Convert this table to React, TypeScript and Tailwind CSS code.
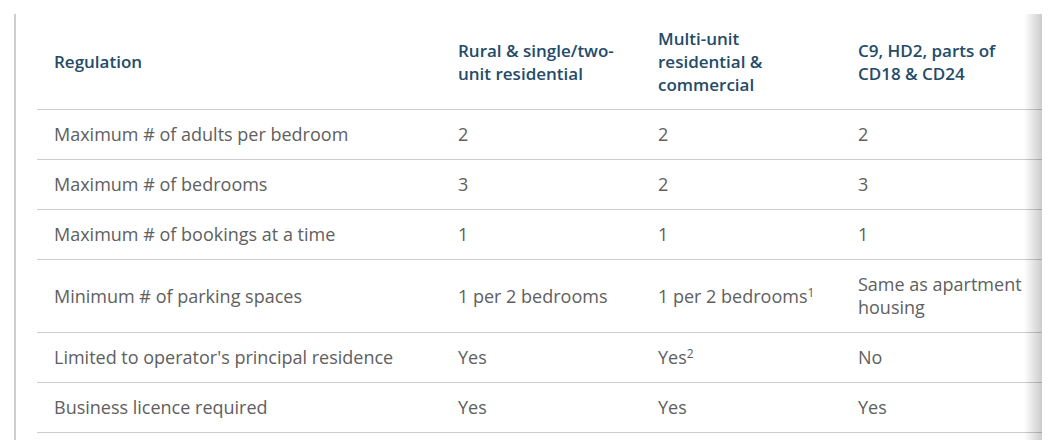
import React from "react";

const rows: { label: string; cells: React.ReactNode[] }[] = [
  { label: "Maximum # of adults per bedroom", cells: ["2", "2", "2"] },
  { label: "Maximum # of bedrooms", cells: ["3", "2", "3"] },
  { label: "Maximum # of bookings at a time", cells: ["1", "1", "1"] },
  {
    label: "Minimum # of parking spaces",
    cells: [
      "1 per 2 bedrooms",
      <>
        1 per 2 bedrooms<sup className="text-[12px] leading-none">1</sup>
      </>,
      "Same as apartment housing",
    ],
  },
  {
    label: "Limited to operator's principal residence",
    cells: [
      "Yes",
      <>
        Yes<sup className="text-[12px] leading-none">2</sup>
      </>,
      "No",
    ],
  },
  { label: "Business licence required", cells: ["Yes", "Yes", "Yes"] },
];

export default function App() {
  return (
    <div
      className="min-h-screen bg-white pt-[14px] pl-[14px] pr-[15px]"
      style={{ fontFamily: '"Open Sans", "Liberation Sans", sans-serif' }}
    >
      <div className="relative border-l-2 border-[#cfcfcf] pl-[21px] overflow-hidden h-[426px]">
        <table className="w-full table-fixed border-collapse text-left">
          <colgroup>
            <col className="w-[404px]" />
            <col className="w-[200px]" />
            <col className="w-[200px]" />
            <col />
          </colgroup>
          <thead>
            <tr className="border-b border-[#cccccc]">
              <th className="px-[17px] py-[13px] text-[17px] leading-[23px] font-semibold text-[#244b68] align-middle">
                Regulation
              </th>
              <th className="pl-[17px] pr-[10px] py-[13px] text-[17px] leading-[23px] font-semibold text-[#244b68] align-middle">
                Rural &amp; single/two-unit residential
              </th>
              <th className="pl-[17px] pr-[40px] py-[13px] text-[17px] leading-[23px] font-semibold text-[#244b68] align-middle">
                Multi-unit residential &amp; commercial
              </th>
              <th className="pl-[17px] pr-[10px] py-[13px] text-[17px] leading-[23px] font-semibold text-[#244b68] align-middle">
                C9, HD2, parts of CD18 &amp; CD24
              </th>
            </tr>
          </thead>
          <tbody>
            {rows.map((r) => (
              <tr key={r.label} className="border-b border-[#cccccc]">
                <td className="px-[17px] py-[13px] text-[18px] leading-[23px] text-[#606060] align-middle">
                  {r.label}
                </td>
                {r.cells.map((c, i) => (
                  <td
                    key={i}
                    className="pl-[17px] pr-[10px] py-[13px] text-[18px] leading-[23px] text-[#606060] align-middle"
                  >
                    {c}
                  </td>
                ))}
              </tr>
            ))}
          </tbody>
        </table>
        {/* scroll shadow on the right edge */}
        <div className="pointer-events-none absolute right-0 top-0 bottom-0 w-[18px] bg-gradient-to-r from-transparent to-[rgba(0,0,0,0.2)]" />
      </div>
    </div>
  );
}
